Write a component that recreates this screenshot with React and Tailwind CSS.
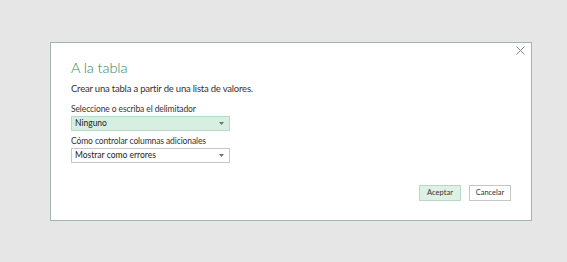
import React from 'react';

const Caret = () => (
    <svg width="5" height="3" viewBox="0 0 5 3" className="mr-[5px]">
        <path d="M0 0 L5 0 L2.5 3 Z" fill="#707070" />
    </svg>
);

export default function App() {
    return (
        <div className="w-[567px] h-[262px] bg-[#e6e6e6] pt-[42px] pl-[50px]" style={{ fontFamily: 'Lato, "Noto Sans", sans-serif' }}>
            <div className="relative w-[482px] h-[179px] bg-white border border-[#9fb7ac] flex flex-col pl-[20px] pr-[20px]">
                {/* close */}
                <svg width="9" height="9" viewBox="0 0 9 9" className="absolute right-[6px] top-[3px]">
                    <path d="M0.5 0.5 L8.5 8.5 M8.5 0.5 L0.5 8.5" stroke="#8a8a8a" strokeWidth="1" />
                </svg>

                <h1 className="mt-[15px] text-[14.5px] leading-[20px] font-light text-[#2f8a5a] tracking-[-0.1px]">A la tabla</h1>
                <p className="mt-[4px] text-[9.5px] leading-[14px] text-[#333] tracking-[-0.2px]">Crear una tabla a partir de una lista de valores.</p>

                <label className="mt-[7px] text-[8.5px] leading-[13px] text-[#333] tracking-[-0.1px]">Seleccione o escriba el delimitador</label>
                <div className="w-[159px] h-[15px] bg-[#d6efe1] border border-[#b7dcc6] flex items-center justify-between">
                    <span className="pl-[3px] text-[8.5px] text-[#222]">Ninguno</span>
                    <Caret />
                </div>

                <label className="mt-[4px] text-[8.5px] leading-[13px] text-[#333] tracking-[-0.1px]">Cómo controlar columnas adicionales</label>
                <div className="w-[159px] h-[15px] bg-white border border-[#c6c6c6] flex items-center justify-between">
                    <span className="pl-[3px] text-[8.5px] text-[#222]">Mostrar como errores</span>
                    <Caret />
                </div>

                <div className="mt-auto mb-[19px] flex justify-end gap-[8px]">
                    <button className="w-[42px] h-[16px] bg-[#dff0e6] border border-[#b7d8c5] text-[7.5px] text-[#333] leading-none">Aceptar</button>
                    <button className="w-[42px] h-[16px] bg-white border border-[#c6c6c6] text-[7.5px] text-[#333] leading-none">Cancelar</button>
                </div>
            </div>
        </div>
    );
}
